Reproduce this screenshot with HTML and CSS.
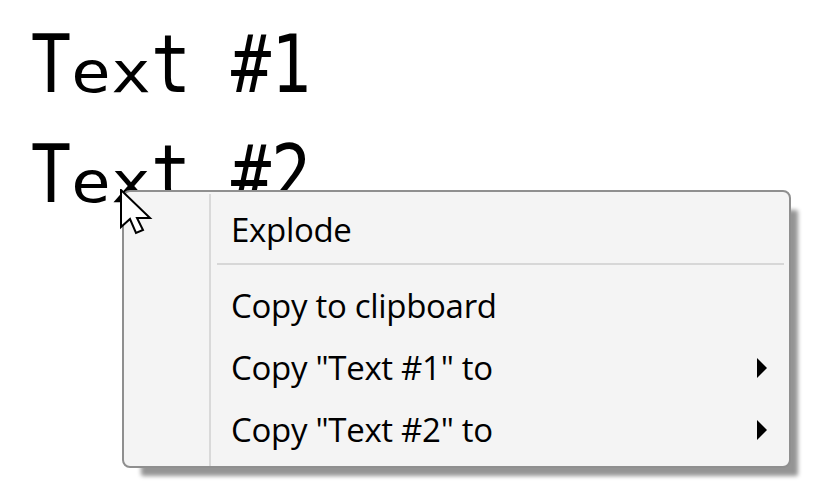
FILE: index.html
```html
<!DOCTYPE html>
<html lang="en">
<head>
    <meta charset="UTF-8">
    <meta name="viewport" content="width=device-width, initial-scale=1.0">
    <title>Drawing - Context Menu</title>
    <link rel="stylesheet" href="styles.css">
</head>
<body>
    <div class="canvas">
        <!-- Text entities on the drawing (CAD font has short lowercase) -->
        <p class="cad-text">T<span class="lc">ex</span>t #1</p>
        <p class="cad-text">T<span class="lc">ex</span>t #2</p>

        <!-- Right-click menu -->
        <div class="context-menu">
            <div class="gutter"></div>
            <ul class="menu-items">
                <li class="menu-item">Explode</li>
                <li class="separator"></li>
                <li class="menu-item">Copy to clipboard</li>
                <li class="menu-item">Copy "Text #1" to <span class="arrow"></span></li>
                <li class="menu-item">Copy "Text #2" to <span class="arrow"></span></li>
            </ul>
        </div>

        <svg class="cursor" width="33" height="46" viewBox="0 0 33 46">
            <polygon points="1,1 1,38 10,30 16,44 23,41 17,29 30,29" fill="#fff" stroke="#000" stroke-width="2" stroke-linejoin="miter"/>
        </svg>
    </div>
</body>
</html>
```

FILE: styles.css
```css
body {
    margin: 0;
    padding: 0;
    background-color: #fff;
    font-family: "Open Sans", "Noto Sans", sans-serif;
}
.canvas {
    position: relative;
    width: 827px;
    height: 499px;
    padding-top: 9px;
    box-sizing: border-box;
    overflow: hidden;
}
.cad-text {
    margin: 0 0 0 31px;
    font-family: "DejaVu Sans Mono", monospace;
    font-size: 81px;
    line-height: 110px;
    color: #000;
    transform: scaleX(0.82);
    transform-origin: left center;
    white-space: pre;
}
.cad-text .lc {
    display: inline-block;
    transform: scaleY(0.7);
    transform-origin: 0 83px;
}
.context-menu {
    position: absolute;
    left: 122px;
    top: 190px;
    width: 669px;
    display: flex;
    box-sizing: border-box;
    background-color: #f4f4f4;
    border: 2px solid #8f8f8f;
    border-radius: 8px;
    box-shadow: 13px 14px 4px -6px rgba(0, 0, 0, 0.42);
}
.gutter {
    width: 85px;
    border-right: 2px solid #d9d9d9;
    margin: 2px 0 0;
}
.menu-items {
    flex: 1;
    list-style: none;
    margin: 0;
    padding: 6px 22px 5px 20px;
}
.menu-item {
    display: flex;
    justify-content: space-between;
    align-items: center;
    height: 62px;
    font-size: 33px;
    letter-spacing: -0.3px;
    color: #000;
}
.separator {
    height: 2px;
    margin: 3px -17px 9.5px -14px;
    background-color: #d7d7d7;
}
.arrow {
    width: 0;
    height: 0;
    border-left: 10px solid #000;
    border-top: 10px solid transparent;
    border-bottom: 10px solid transparent;
}
.cursor {
    position: absolute;
    left: 120px;
    top: 189px;
}
```
